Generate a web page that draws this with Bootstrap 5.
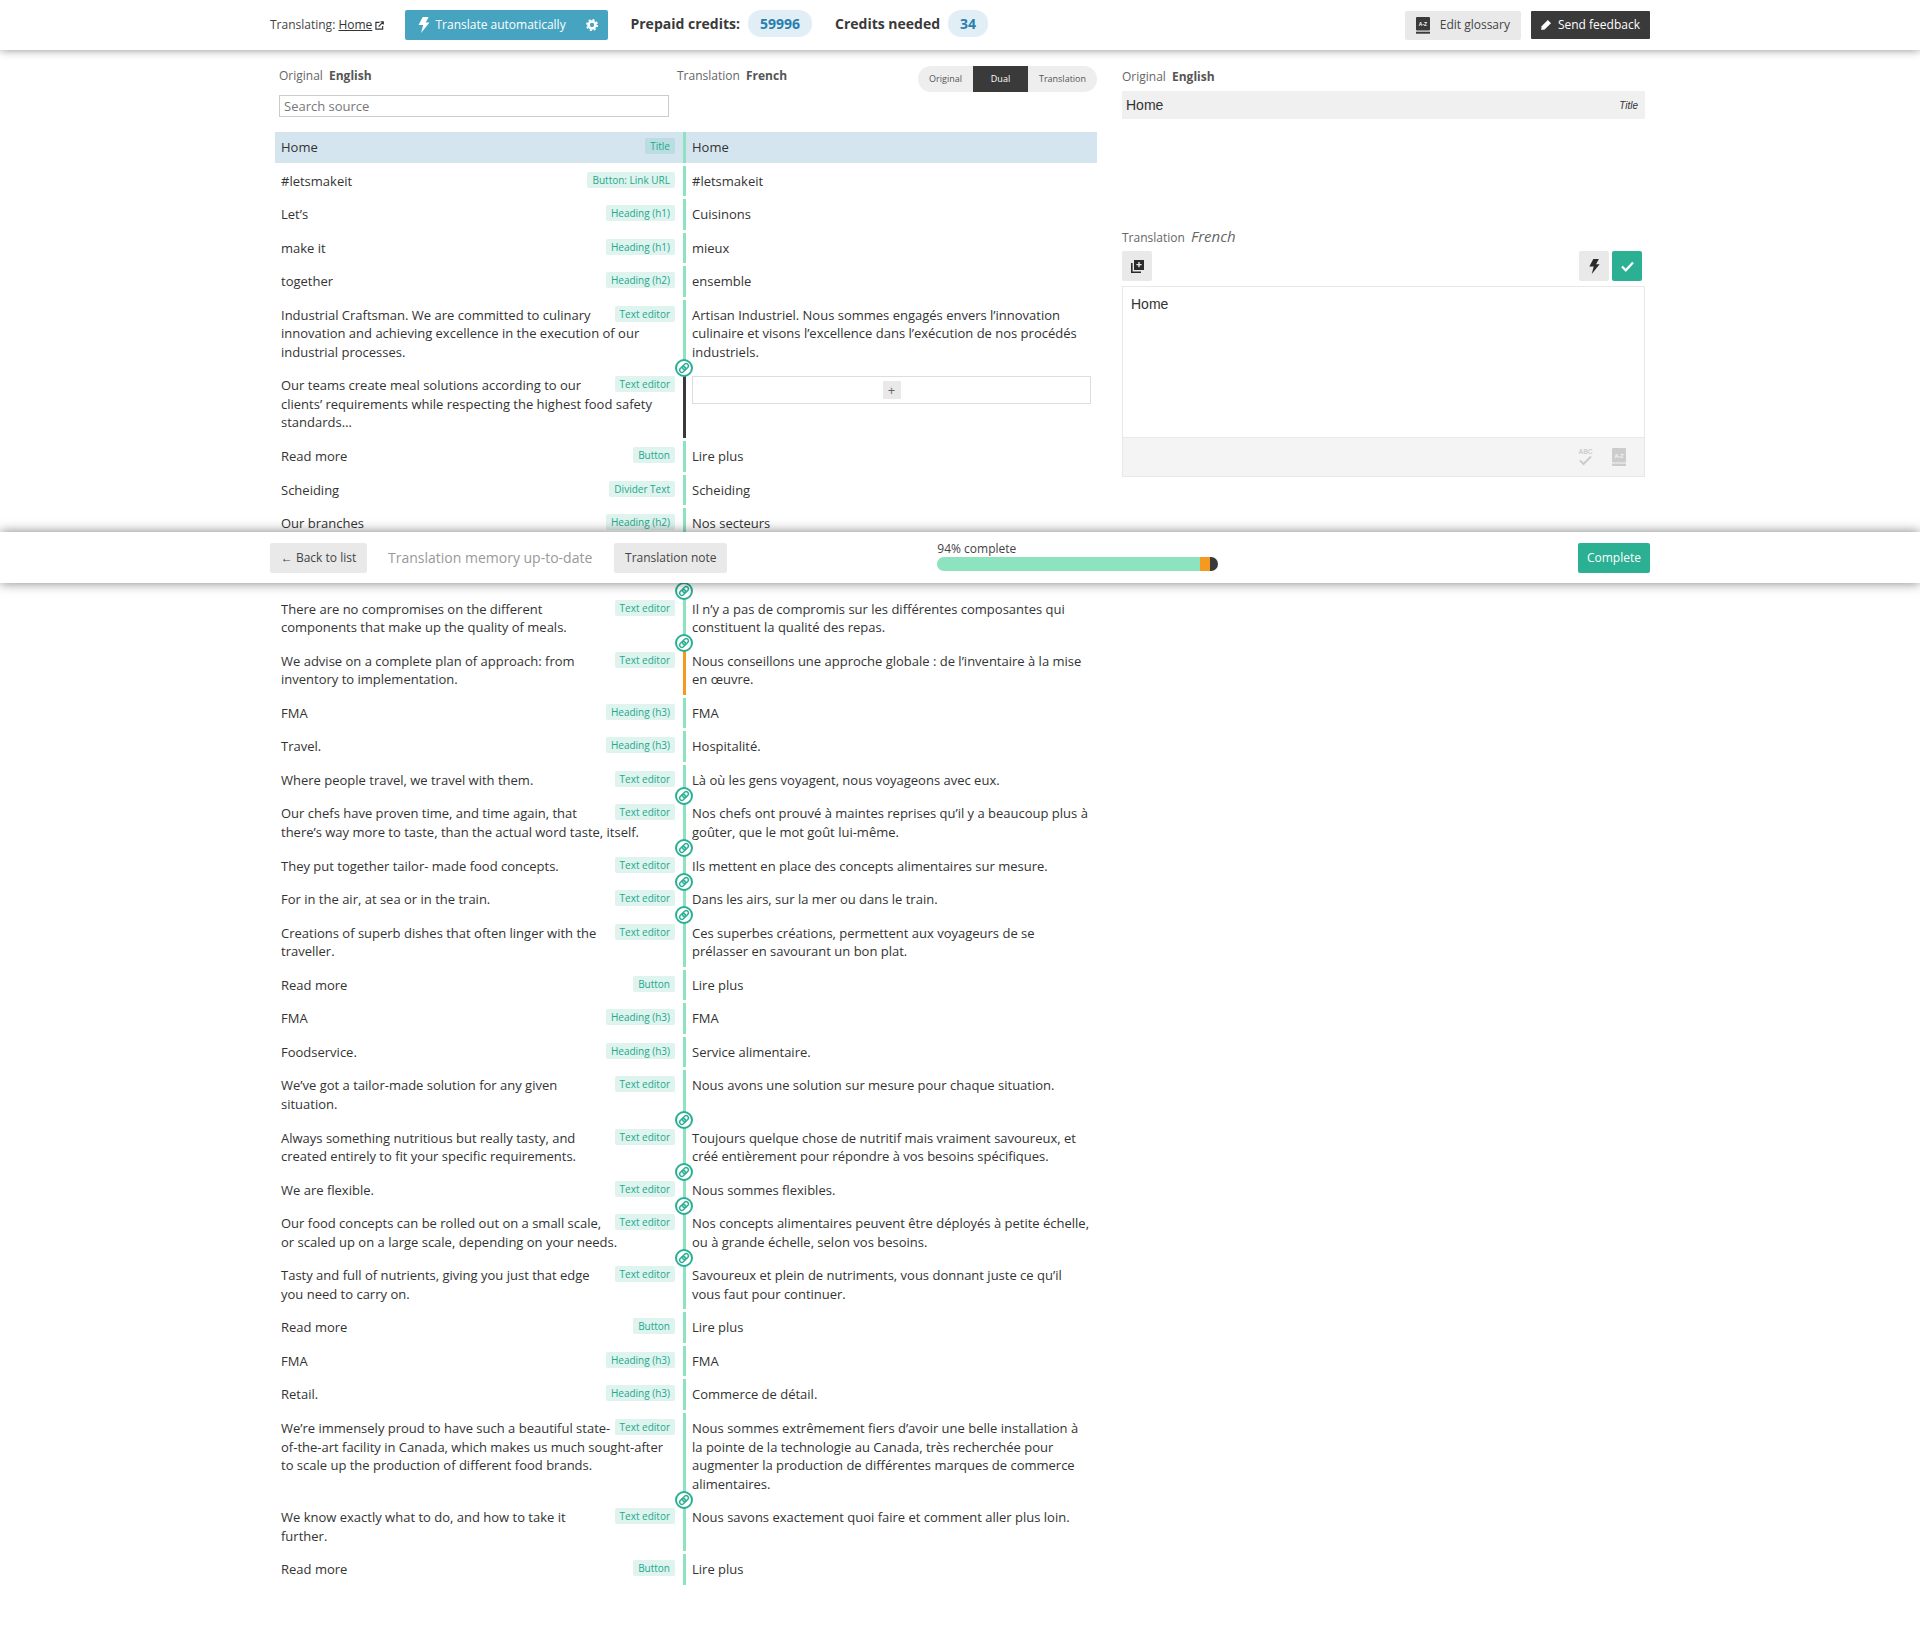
<!DOCTYPE html>
<html lang="en">
<head>
<meta charset="utf-8">
<title>Translating: Home</title>
<link rel="stylesheet" href="https://cdn.jsdelivr.net/npm/bootstrap@5.3.0/dist/css/bootstrap.min.css">
<style>
body{font-family:"Open Sans",sans-serif;color:#333;font-size:13px;background:#fff;position:relative;min-height:1639px}
.wrap-x{width:1380px;margin:0 auto}
.top-bar{height:50px;background:#fff;box-shadow:0 0 9px rgba(0,0,0,.45);position:relative;z-index:5}
.bot-bar{position:absolute;top:532px;left:0;right:0;height:51px;background:#fff;box-shadow:0 0 11px rgba(0,0,0,.5);z-index:5}
.ubtn{font-size:12px;line-height:1;border-radius:2px;border:0;padding:0 10px;height:30px;display:inline-flex;align-items:center;white-space:nowrap}
.ubtn-grey{background:#e9e9e9;color:#444}
.ubtn-glossary{padding:0 11px;gap:10px;height:29px}
.ubtn-dark{background:#3a3a3a;color:#fff;height:28px;border-radius:1px;gap:7px}
.ubtn-blue{background:#46a4c1;color:#fff;width:203px;height:30px;padding:0 10px 0 13px}
.ubtn-teal{background:#2bb094;color:#fff}
.ubtn-sq{width:30px;padding:0;justify-content:center}
.ubtn-back{width:97px;padding:0;justify-content:center}
.ubtn-note{width:113px;padding:0;justify-content:center}
.ubtn-done{width:72px;padding:0;justify-content:center}
.bolt-gap{gap:5px}
.tr-label{font-size:12px;color:#444;margin-right:21px}
.tr-label a{color:#333}
.cred-label{font-weight:700;font-size:14px;color:#3a3a3a;margin-top:-3px}
.first-cred{margin-left:22px}
.cred-pill{background:#e1eef5;color:#2a7fae;font-weight:700;font-size:14px;height:27px;border-radius:13px;display:inline-flex;align-items:center;justify-content:center;margin-top:-3px}
.pill-a{width:64px;margin-left:8px;margin-right:23px}
.pill-b{width:40px;margin-left:8px}
.gap-10{gap:10px}
.gap-3px{gap:3px}
.main-row{padding-top:16px;width:1370px;margin:0 auto;gap:25px}
.col-left{width:822px;flex:none}
.col-right{width:523px;flex:none}
.head-l{width:402px;padding-left:4px}
.head-r{width:420px}
.lbl{font-size:12px;color:#666;line-height:18px;padding-top:1px}
.lbl-top{padding-top:2px}
.lbl b{color:#555;margin-left:3px}
.lbl i{font-size:15px;margin-left:3px}
.seg-group .btn{font-size:9px;height:26px;line-height:26px;padding:0;border:0;background:#eee;color:#555;border-radius:0}
.btn-group.seg-group>.btn.btn{margin-left:0}
.seg-group .btn:first-child{width:55px;border-radius:13px 0 0 13px}
.seg-group .btn:nth-child(2){width:55px;background:#3a3a3a;color:#fff}
.seg-group .btn:last-child{width:69px;border-radius:0 13px 13px 0}
.search-box{width:390px;height:22px;margin-top:3px;margin-bottom:15px;padding:0 4px;font-size:13px;border:1px solid #ccc;border-radius:0;color:#555}
.search-box::placeholder{color:#777;opacity:1}
.seg-line{display:flex;position:relative;line-height:18.55px;margin-bottom:3px;font-size:13px}
.seg-src{width:408px;flex:none;padding:6px 8px 6px 6px}
.seg-tgt{width:414px;flex:none;padding:6px;border-left:3px solid #8de3bf}
.seg-on{background:#d4e5ef}
.bar-dark{border-left-color:#3a3a3a}
.bar-warn{border-left-color:#f39a1f}
.src-tag{float:right;font-size:10px;line-height:12px;padding:2px 5px;margin-left:4px;border-radius:2px;background:rgba(43,176,148,.15);color:#22a98c}
.link-dot{position:absolute;left:400px;bottom:-9.5px;width:18px;height:18px;border-radius:50%;background:#fff;border:2px solid #2bb094;z-index:2;display:flex;align-items:center;justify-content:center}
.blank-src{min-height:49px}
.empty-box{height:28px;margin-bottom:27px;border:1px solid #ddd;display:flex;align-items:center;justify-content:center}
.add-btn{width:18px;height:18px;background:#e9e9e9;color:#666;font-size:13px;line-height:18px;text-align:center;border-radius:1px}
.orig-box{height:28px;background:#f0f0f0;padding:0 7px 0 4px;margin:5px 0 106px;font-family:"Liberation Sans",sans-serif;font-size:14px;color:#333}
.orig-box i{font-size:10px}
.lbl-tr{line-height:22px;padding:0;height:24px}
.tool-row{height:30px;margin-top:2px;margin-bottom:5px;padding-right:3px}
.edit-box{height:191px;border:1px solid #e8e8e8;border-bottom-width:2px}
.edit-area{height:150px;padding:8px;font-family:"Liberation Sans",sans-serif;font-size:14px;color:#333;line-height:18px}
.edit-foot{height:39px;background:#f4f4f4;border-top:1px solid #e8e8e8;padding-right:18px;gap:19px}
.memo-txt{font-size:14px;color:#999;margin:0 22px 0 21px}
.prog-wrap{width:281px;margin-left:210px;margin-top:-2px}
.prog-cap{font-size:12px;line-height:14px;color:#444;margin-bottom:1px}
.prog-track{height:14px;border-radius:7px;background:#eee}
.prog-track .progress-bar{background:#8de3bf}
.prog-track .fill-warn{background:#f39a1f}
.prog-track .fill-dark{background:#3a3a3a}
</style>
</head>
<body>

<svg class="d-none" aria-hidden="true"><symbol id="chain" viewBox="0 0 12 12"><g transform="rotate(-45 6 6)" fill="none" stroke="#2bb094" stroke-width="1.500"><rect x="0.800" y="3.800" width="6.400" height="4.400" rx="2.200"/><rect x="4.800" y="3.800" width="6.400" height="4.400" rx="2.200"/></g></symbol></svg>

<header class="top-bar">
  <div class="wrap-x d-flex align-items-center h-100">
    <span class="tr-label">Translating: <a href="#">Home</a>
      <svg width="9" height="9" viewBox="0 0 10 10" fill="none" stroke="#333" stroke-width="1.3"><path d="M5 1.5H1v7.5h7.500V5.500"/><path d="M4 6.200 9 1M6 .8h3.200V4"/></svg>
    </span>
    <button class="btn ubtn ubtn-blue justify-content-between" type="button">
      <span class="d-inline-flex align-items-center bolt-gap">
        <svg width="12" height="16" viewBox="0 0 13 19" fill="#fff"><path d="M5 0h7L8.500 6.500H13L3 19l2.500-9.500H0z"/></svg>
        Translate automatically
      </span>
      <svg width="12" height="12" viewBox="0 0 14 14"><circle cx="7" cy="7" r="4" fill="none" stroke="#fff" stroke-width="3"/><circle cx="7" cy="7" r="6" fill="none" stroke="#fff" stroke-width="2" stroke-dasharray="2.400 2.300"/></svg>
    </button>
    <span class="cred-label first-cred">Prepaid credits:</span>
    <span class="cred-pill pill-a">59996</span>
    <span class="cred-label">Credits needed</span>
    <span class="cred-pill pill-b">34</span>
    <div class="ms-auto d-flex align-items-center gap-10">
      <button class="btn ubtn ubtn-grey ubtn-glossary" type="button">
        <svg width="14" height="17" viewBox="0 0 14 17"><rect width="14" height="13.500" rx="1" fill="#3a3a3a"/><rect y="14.700" width="14" height="2" fill="#3a3a3a"/><text x="7" y="9" font-size="5" font-family="Liberation Sans" font-weight="700" fill="#fff" text-anchor="middle">A-Z</text></svg>
        <span>Edit glossary</span>
      </button>
      <button class="btn ubtn ubtn-dark" type="button">
        <svg width="10" height="10" viewBox="0 0 11 11" fill="#fff"><path d="M7.500 0 11 3.500 4 10.500.3 11 .6 7z"/></svg>
        <span>Send feedback</span>
      </button>
    </div>
  </div>
</header>

<main class="main-row d-flex">
  <section class="col-left">
    <div class="d-flex">
      <div class="head-l">
        <div class="lbl">Original <b>English</b></div>
      </div>
      <div class="head-r d-flex justify-content-between align-items-start">
        <div class="lbl">Translation <b>French</b></div>
        <div class="btn-group seg-group" role="group">
          <button class="btn" type="button">Original</button>
          <button class="btn" type="button">Dual</button>
          <button class="btn" type="button">Translation</button>
        </div>
      </div>
    </div>
    <div class="ps-1"><input class="form-control search-box" type="text" placeholder="Search source"></div>

    <div class="seg-line"><div class="seg-src seg-on"><span class="src-tag">Title</span>Home</div><div class="seg-tgt seg-on">Home</div></div>
    <div class="seg-line"><div class="seg-src"><span class="src-tag">Button: Link URL</span>#letsmakeit</div><div class="seg-tgt">#letsmakeit</div></div>
    <div class="seg-line"><div class="seg-src"><span class="src-tag">Heading (h1)</span>Let’s</div><div class="seg-tgt">Cuisinons</div></div>
    <div class="seg-line"><div class="seg-src"><span class="src-tag">Heading (h1)</span>make it</div><div class="seg-tgt">mieux</div></div>
    <div class="seg-line"><div class="seg-src"><span class="src-tag">Heading (h2)</span>together</div><div class="seg-tgt">ensemble</div></div>
    <div class="seg-line"><div class="seg-src"><span class="src-tag">Text editor</span>Industrial Craftsman. We are committed to culinary innovation and achieving excellence in the execution of our industrial processes.</div><div class="seg-tgt">Artisan Industriel. Nous sommes engagés envers l’innovation culinaire et visons l’excellence dans l’exécution de nos procédés industriels.</div><span class="link-dot"><svg width="12" height="12"><use href="#chain"/></svg></span></div>
    <div class="seg-line"><div class="seg-src"><span class="src-tag">Text editor</span>Our teams create meal solutions according to our clients’ requirements while respecting the highest food safety standards…</div><div class="seg-tgt bar-dark"><div class="empty-box"><span class="add-btn">+</span></div></div></div>
    <div class="seg-line"><div class="seg-src"><span class="src-tag">Button</span>Read more</div><div class="seg-tgt">Lire plus</div></div>
    <div class="seg-line"><div class="seg-src"><span class="src-tag">Divider Text</span>Scheiding</div><div class="seg-tgt">Scheiding</div></div>
    <div class="seg-line"><div class="seg-src"><span class="src-tag">Heading (h2)</span>Our branches</div><div class="seg-tgt">Nos secteurs</div></div>
    <div class="seg-line"><div class="seg-src blank-src"></div><div class="seg-tgt"></div><span class="link-dot"><svg width="12" height="12"><use href="#chain"/></svg></span></div>
    <div class="seg-line"><div class="seg-src"><span class="src-tag">Text editor</span>There are no compromises on the different components that make up the quality of meals.</div><div class="seg-tgt">Il n’y a pas de compromis sur les différentes composantes qui constituent la qualité des repas.</div><span class="link-dot"><svg width="12" height="12"><use href="#chain"/></svg></span></div>
    <div class="seg-line"><div class="seg-src"><span class="src-tag">Text editor</span>We advise on a complete plan of approach: from inventory to implementation.</div><div class="seg-tgt bar-warn">Nous conseillons une approche globale : de l’inventaire à la mise en œuvre.</div></div>
    <div class="seg-line"><div class="seg-src"><span class="src-tag">Heading (h3)</span>FMA</div><div class="seg-tgt">FMA</div></div>
    <div class="seg-line"><div class="seg-src"><span class="src-tag">Heading (h3)</span>Travel.</div><div class="seg-tgt">Hospitalité.</div></div>
    <div class="seg-line"><div class="seg-src"><span class="src-tag">Text editor</span>Where people travel, we travel with them.</div><div class="seg-tgt">Là où les gens voyagent, nous voyageons avec eux.</div><span class="link-dot"><svg width="12" height="12"><use href="#chain"/></svg></span></div>
    <div class="seg-line"><div class="seg-src"><span class="src-tag">Text editor</span>Our chefs have proven time, and time again, that there’s way more to taste, than the actual word taste, itself.</div><div class="seg-tgt">Nos chefs ont prouvé à maintes reprises qu’il y a beaucoup plus à goûter, que le mot goût lui-même.</div><span class="link-dot"><svg width="12" height="12"><use href="#chain"/></svg></span></div>
    <div class="seg-line"><div class="seg-src"><span class="src-tag">Text editor</span>They put together tailor- made food concepts.</div><div class="seg-tgt">Ils mettent en place des concepts alimentaires sur mesure.</div><span class="link-dot"><svg width="12" height="12"><use href="#chain"/></svg></span></div>
    <div class="seg-line"><div class="seg-src"><span class="src-tag">Text editor</span>For in the air, at sea or in the train.</div><div class="seg-tgt">Dans les airs, sur la mer ou dans le train.</div><span class="link-dot"><svg width="12" height="12"><use href="#chain"/></svg></span></div>
    <div class="seg-line"><div class="seg-src"><span class="src-tag">Text editor</span>Creations of superb dishes that often linger with the traveller.</div><div class="seg-tgt">Ces superbes créations, permettent aux voyageurs de se prélasser en savourant un bon plat.</div></div>
    <div class="seg-line"><div class="seg-src"><span class="src-tag">Button</span>Read more</div><div class="seg-tgt">Lire plus</div></div>
    <div class="seg-line"><div class="seg-src"><span class="src-tag">Heading (h3)</span>FMA</div><div class="seg-tgt">FMA</div></div>
    <div class="seg-line"><div class="seg-src"><span class="src-tag">Heading (h3)</span>Foodservice.</div><div class="seg-tgt">Service alimentaire.</div></div>
    <div class="seg-line"><div class="seg-src"><span class="src-tag">Text editor</span>We’ve got a tailor-made solution for any given situation.</div><div class="seg-tgt">Nous avons une solution sur mesure pour chaque situation.</div><span class="link-dot"><svg width="12" height="12"><use href="#chain"/></svg></span></div>
    <div class="seg-line"><div class="seg-src"><span class="src-tag">Text editor</span>Always something nutritious but really tasty, and created entirely to fit your specific requirements.</div><div class="seg-tgt">Toujours quelque chose de nutritif mais vraiment savoureux, et créé entièrement pour répondre à vos besoins spécifiques.</div><span class="link-dot"><svg width="12" height="12"><use href="#chain"/></svg></span></div>
    <div class="seg-line"><div class="seg-src"><span class="src-tag">Text editor</span>We are flexible.</div><div class="seg-tgt">Nous sommes flexibles.</div><span class="link-dot"><svg width="12" height="12"><use href="#chain"/></svg></span></div>
    <div class="seg-line"><div class="seg-src"><span class="src-tag">Text editor</span>Our food concepts can be rolled out on a small scale, or scaled up on a large scale, depending on your needs.</div><div class="seg-tgt">Nos concepts alimentaires peuvent être déployés à petite échelle, ou à grande échelle, selon vos besoins.</div><span class="link-dot"><svg width="12" height="12"><use href="#chain"/></svg></span></div>
    <div class="seg-line"><div class="seg-src"><span class="src-tag">Text editor</span>Tasty and full of nutrients, giving you just that edge you need to carry on.</div><div class="seg-tgt">Savoureux et plein de nutriments, vous donnant juste ce qu’il vous faut pour continuer.</div></div>
    <div class="seg-line"><div class="seg-src"><span class="src-tag">Button</span>Read more</div><div class="seg-tgt">Lire plus</div></div>
    <div class="seg-line"><div class="seg-src"><span class="src-tag">Heading (h3)</span>FMA</div><div class="seg-tgt">FMA</div></div>
    <div class="seg-line"><div class="seg-src"><span class="src-tag">Heading (h3)</span>Retail.</div><div class="seg-tgt">Commerce de détail.</div></div>
    <div class="seg-line"><div class="seg-src"><span class="src-tag">Text editor</span>We’re immensely proud to have such a beautiful state-of-the-art facility in Canada, which makes us much sought-after to scale up the production of different food brands.</div><div class="seg-tgt">Nous sommes extrêmement fiers d’avoir une belle installation à la pointe de la technologie au Canada, très recherchée pour augmenter la production de différentes marques de commerce alimentaires.</div><span class="link-dot"><svg width="12" height="12"><use href="#chain"/></svg></span></div>
    <div class="seg-line"><div class="seg-src"><span class="src-tag">Text editor</span>We know exactly what to do, and how to take it further.</div><div class="seg-tgt">Nous savons exactement quoi faire et comment aller plus loin.</div></div>
    <div class="seg-line"><div class="seg-src"><span class="src-tag">Button</span>Read more</div><div class="seg-tgt">Lire plus</div></div>
  </section>

  <aside class="col-right">
    <div class="lbl lbl-top">Original <b>English</b></div>
    <div class="orig-box d-flex justify-content-between align-items-center"><span>Home</span><i>Title</i></div>
    <div class="lbl lbl-tr">Translation <i>French</i></div>
    <div class="tool-row d-flex justify-content-between">
      <button class="btn ubtn ubtn-grey ubtn-sq" type="button" aria-label="Copy source">
        <svg width="13" height="13" viewBox="0 0 13 13" fill="#2b2b2b"><path d="M3 0h10v10H3zM7.300 2v2H5.400v1.300h1.900v2h1.400v-2h1.900V4H8.700V2z"/><path d="M0 3h1.600v8.400H10V13H0z"/></svg>
      </button>
      <div class="d-flex gap-3px">
        <button class="btn ubtn ubtn-grey ubtn-sq" type="button" aria-label="Translate">
          <svg width="11" height="15" viewBox="0 0 13 19" fill="#2b2b2b"><path d="M5 0h7L8.500 6.500H13L3 19l2.500-9.500H0z"/></svg>
        </button>
        <button class="btn ubtn ubtn-teal ubtn-sq" type="button" aria-label="Confirm">
          <svg width="13" height="11" viewBox="0 0 13 11" fill="none" stroke="#fff" stroke-width="2.200"><path d="M1 5.500 4.800 9.300 12 1.500"/></svg>
        </button>
      </div>
    </div>
    <div class="edit-box">
      <div class="edit-area">Home</div>
      <div class="edit-foot d-flex justify-content-end align-items-center">
        <svg width="15" height="19" viewBox="0 0 15 19" fill="none"><text x="7.500" y="6" font-size="6.500" font-family="Liberation Sans" font-weight="700" fill="#ccc" text-anchor="middle">ABC</text><path d="M2 12.500 5.500 16 13 8.500" stroke="#ccc" stroke-width="2"/></svg>
        <svg width="14" height="18" viewBox="0 0 14 18"><rect width="14" height="14.500" rx="1" fill="#ccc"/><rect y="15.500" width="14" height="2.500" fill="#ccc"/><text x="7" y="9.500" font-size="5.500" font-family="Liberation Sans" font-weight="700" fill="#f4f4f4" text-anchor="middle">A-Z</text></svg>
      </div>
    </div>
  </aside>
</main>

<footer class="bot-bar">
  <div class="wrap-x d-flex align-items-center h-100">
    <button class="btn ubtn ubtn-grey ubtn-back" type="button">← Back to list</button>
    <span class="memo-txt">Translation memory up-to-date</span>
    <button class="btn ubtn ubtn-grey ubtn-note" type="button">Translation note</button>
    <div class="prog-wrap">
      <div class="prog-cap">94% complete</div>
      <div class="progress prog-track">
        <div class="progress-bar" style="width:93.6%"></div>
        <div class="progress-bar fill-warn" style="width:3.6%"></div>
        <div class="progress-bar fill-dark" style="width:2.8%"></div>
      </div>
    </div>
    <button class="btn ubtn ubtn-teal ubtn-done ms-auto" type="button">Complete</button>
  </div>
</footer>

<script src="https://cdn.jsdelivr.net/npm/bootstrap@5.3.0/dist/js/bootstrap.bundle.min.js"></script>
</body>
</html>
